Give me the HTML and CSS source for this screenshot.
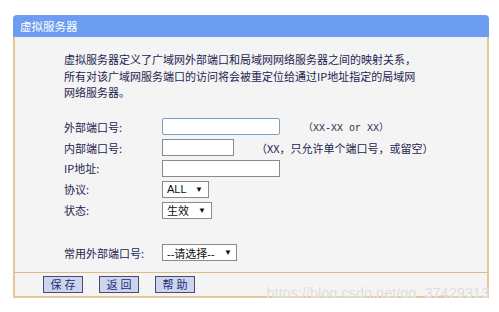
FILE: index.html
```html
<!DOCTYPE html>
<html lang="zh-CN">
<head>
  <meta charset="UTF-8" />
  <title>虚拟服务器</title>
  <link rel="stylesheet" href="styles.css">
</head>
<body>

  <div class="panel">
    <div class="panel-title">虚拟服务器</div>

    <div class="panel-body">
      <p class="intro">
        虚拟服务器定义了广域网外部端口和局域网网络服务器之间的映射关系，<br>
        所有对该广域网服务端口的访问将会被重定位给通过IP地址指定的局域网<br>
        网络服务器。
      </p>

      <div class="form">
        <div class="row">
          <span class="label">外部端口号:</span>
          <span class="input wide focus"></span>
          <span class="hint mono">（XX-XX or XX）</span>
        </div>
        <div class="row">
          <span class="label">内部端口号:</span>
          <span class="input short"></span>
          <span class="hint">（XX，只允许单个端口号，或留空）</span>
        </div>
        <div class="row">
          <span class="label">IP地址:</span>
          <span class="input wide"></span>
        </div>
        <div class="row">
          <span class="label">协议:</span>
          <span class="select sel-all">ALL <i>▼</i></span>
        </div>
        <div class="row">
          <span class="label">状态:</span>
          <span class="select sel-state">生效 <i>▼</i></span>
        </div>

        <div class="row common">
          <span class="label">常用外部端口号:</span>
          <span class="select sel-common">--请选择-- <i>▼</i></span>
        </div>
      </div>
    </div>

    <div class="panel-foot">
      <button class="btn">保存</button>
      <button class="btn">返回</button>
      <button class="btn">帮助</button>
    </div>

    <div class="watermark">https://blog.csdn.net/qq_37429313</div>
  </div>

</body>
</html>
```

FILE: styles.css
```css
body {
  margin: 0;
  background-color: #ffffff;
  font-family: "Noto Sans CJK SC", "Liberation Sans", sans-serif;
  font-size: 11px;
  color: #1e2450;
}

.panel {
  position: relative;
  margin: 15px 0 0 13px;
  width: 476px;
}

.panel-title {
  height: 22px;
  line-height: 22px;
  padding-left: 7px;
  background-color: #6d9df0;
  color: #ffffff;
  font-size: 11.5px;
  border-radius: 4px 4px 0 0;
}

.panel-body {
  background-color: #f4f4f4;
  border-left: 2px solid #e5c696;
  border-right: 2px solid #e5c696;
  border-bottom: 1px solid #e2b987;
  padding: 14px 0 0 49px;
  height: 236px;
  box-sizing: border-box;
}

.intro {
  margin: 0;
  line-height: 16.5px;
}

.form {
  margin-top: 16px;
}

.row {
  display: flex;
  align-items: center;
  height: 20.8px;
}

.label {
  width: 98px;
  flex-shrink: 0;
}

.input {
  display: block;
  background: #ffffff;
  border: 1px solid #8a8a8a;
  box-sizing: border-box;
  height: 17px;
}

.input.focus {
  border-color: #7f9db9;
  border-radius: 2px;
}

.wide {
  width: 118px;
}

.short {
  width: 72px;
}

.hint {
  margin-left: 22px;
  white-space: nowrap;
}

.mono {
  margin-left: 23px;
  font-family: "Liberation Mono", "Noto Sans CJK SC", monospace;
  font-size: 10px;
  color: #2a2a50;
}

.select {
  display: flex;
  align-items: center;
  justify-content: space-between;
  height: 17px;
  box-sizing: border-box;
  padding: 0 5px 0 4px;
  background: #ffffff;
  border: 1px solid #8a8a8a;
  color: #111111;
  font-family: "Liberation Sans", "Noto Sans CJK SC", sans-serif;
  font-size: 11px;
}

.select i {
  font-style: normal;
  font-size: 8px;
}

.sel-all {
  width: 47px;
}

.sel-state {
  width: 50px;
}

.sel-common {
  width: 75px;
  padding-right: 4px;
}

.common {
  margin-top: 22px;
}

.panel-foot {
  display: flex;
  gap: 16px;
  padding: 3px 0 0 28px;
  height: 25px;
  box-sizing: border-box;
  background-color: #f4f4f4;
  border-left: 2px solid #e5c696;
  border-right: 2px solid #e5c696;
  border-bottom: 2px solid #e5c696;
}

.btn {
  width: 40px;
  height: 17px;
  padding: 0;
  background-color: #ccd5ee;
  border: 1px solid #4a4a6a;
  color: #1e2a70;
  font-family: "Noto Sans CJK SC", sans-serif;
  font-size: 11px;
  letter-spacing: 3px;
  text-indent: 3px;
  line-height: 15px;
}

.watermark {
  position: absolute;
  right: 0;
  bottom: -3px;
  font-family: "Liberation Sans", sans-serif;
  font-size: 14.5px;
  color: #dcdcdc;
  text-shadow: 0 0 1px #ffffff;
}
```
